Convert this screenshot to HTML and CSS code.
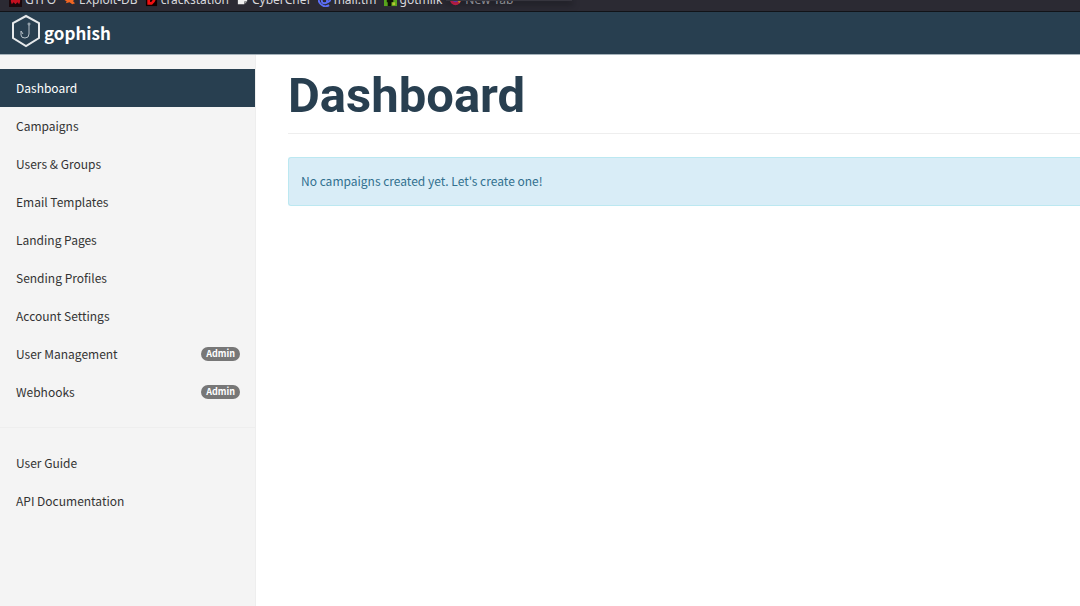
FILE: index.html
```html
<!DOCTYPE html>
<html lang="en">
<head>
<meta charset="utf-8">
<meta name="viewport" content="width=device-width, initial-scale=1">
<title>Gophish - Dashboard</title>
<link rel="stylesheet" href="styles.css">
</head>
<body>
<nav class="bookmarks" aria-label="Bookmarks">
  <a class="bookmark" href="#"><svg class="bookmark-icon" viewBox="0 0 14 14"><path fill="#1b080c" d="M0 0h14v14H0z"/><path fill="#c50f1f" d="M2 1h10v7l-1 3-2-2-2 2-2-2-2 2-1-3z"/></svg>GTFO</a>
  <a class="bookmark" href="#"><svg class="bookmark-icon" viewBox="0 0 14 14"><path fill="#f26522" d="M1 6l5-3 6 2-1 3 2 2-3 1-3-2-4 1 1-2z"/></svg>Exploit-DB</a>
  <a class="bookmark" href="#"><svg class="bookmark-icon" viewBox="0 0 14 14"><path fill="#120000" d="M1 0h12v13H1z"/><path fill="none" stroke="#f01010" stroke-width="3" d="M4 1h3q3 1 3 4t-3 5H4zM4 5h5"/></svg>crackstation</a>
  <a class="bookmark" href="#"><svg class="bookmark-icon" viewBox="0 0 14 14"><path fill="#eee" d="M2 2h10v6H9v3H2z"/><path fill="#999" d="M9 8h2v2H9z"/></svg>CyberChef</a>
  <a class="bookmark" href="#"><svg class="bookmark-icon" viewBox="0 0 14 14"><g fill="none" stroke="#5b6ef5" stroke-width="2"><path d="M12 12q-5 3-9-1t-1-8 8-1 3 5-3 2V4"/><circle cx="7" cy="7" r="3"/></g></svg>mail.tm</a>
  <a class="bookmark" href="#"><svg class="bookmark-icon" viewBox="0 0 14 14"><path fill="#58a51c" d="M0 0h14v13H0z"/><path fill="#101407" d="M3 5h7v4H3zM4 9h4v4H4z"/><path fill="#b8c832" d="M9 9h3v3H9z"/></svg>gotmilk</a>
  <a class="bookmark bookmark-dim" href="#"><svg class="bookmark-icon" viewBox="0 0 14 14"><circle cx="7" cy="6" r="6" fill="#e0224f"/><path fill="#f5a623" d="M10 2l3 5-2 3-2-3z"/><circle cx="7" cy="6" r="3" fill="#7b3fd1"/></svg>New Tab</a>
  <span class="popup-edge"></span>
</nav>
<header class="topbar">
  <a class="brand" href="#">
    <svg class="logo" viewBox="0 0 30 34"><g fill="none" stroke="#e6e9eb"><path stroke-width="2" d="M15 2l13 7v15l-13 8L2 24V9z"/><path stroke-width="1" stroke="#b9c3ca" d="M18 11v9q0 4-4 4-4 0-4-3v-4l2 3"/><circle stroke="#b9c3ca" cx="18" cy="10" r="1"/></g></svg>
    <span class="brand-name">gophish</span>
  </a>
</header>
<div class="layout">
  <aside class="sidebar">
    <ul class="menu">
      <li><a class="menu-link active" href="#" aria-current="page">Dashboard</a></li>
      <li><a class="menu-link" href="#">Campaigns</a></li>
      <li><a class="menu-link" href="#">Users &amp; Groups</a></li>
      <li><a class="menu-link" href="#">Email Templates</a></li>
      <li><a class="menu-link" href="#">Landing Pages</a></li>
      <li><a class="menu-link" href="#">Sending Profiles</a></li>
      <li><a class="menu-link" href="#">Account Settings</a></li>
      <li><a class="menu-link" href="#">User Management <span class="badge">Admin</span></a></li>
      <li><a class="menu-link" href="#">Webhooks <span class="badge">Admin</span></a></li>
    </ul>
    <ul class="menu menu-help">
      <li><a class="menu-link" href="#">User Guide</a></li>
      <li><a class="menu-link" href="#">API Documentation</a></li>
    </ul>
  </aside>
  <main class="content">
    <h1 class="title">Dashboard</h1>
    <div class="alert" role="status">No campaigns created yet. Let's create one!</div>
  </main>
</div>
</body>
</html>
```
FILE: styles.css
```css
* { box-sizing: border-box; }
body {
  margin: 0;
  min-height: 100vh;
  display: flex;
  flex-direction: column;
  background: #fff;
  color: #333;
  font: 12px/20px "Noto Sans CJK SC", "Noto Sans", sans-serif;
}
a { color: inherit; text-decoration: none; }
.bookmarks {
  position: relative;
  display: flex;
  align-items: flex-end;
  gap: 7px;
  height: 12px;
  padding: 0 9px 3px;
  overflow: hidden;
  background: #2b2a33;
  border-bottom: 1px solid #111318;
  color: #d8d8dc;
  font: 12px/16px "Noto Sans", sans-serif;
}
.bookmark { display: flex; align-items: center; gap: 3px; flex: none; }
.bookmark-icon { width: 13px; height: 13px; }
.bookmark-dim { color: #b4b4ba; }
.popup-edge {
  position: absolute;
  left: 446px;
  top: 0;
  width: 126px;
  height: 1px;
  background: #36353e;
  box-shadow: 0 2px 6px 1px rgba(16, 15, 20, 0.7);
}
.topbar { background: #283f50; border-bottom: 1px solid #a5b2ba; }
.brand {
  display: flex;
  align-items: center;
  gap: 3px;
  width: max-content;
  padding: 2px 11px 6px;
  color: #fff;
  font-size: 17px;
  font-weight: 700;
  line-height: 30px;
}
.brand-name { padding-top: 4px; }
.logo { width: 30px; height: 34px; }
.layout { flex: 1; display: grid; grid-template-columns: 256px 1fr; }
.sidebar {
  padding-top: 14px;
  background: #f4f4f4;
  border-right: 1px solid #eee;
}
.menu { margin: 0; padding: 0; list-style: none; }
.menu-help {
  margin-top: 16px;
  padding-top: 16px;
  border-top: 1px solid #eee;
}
.menu-link {
  display: flex;
  align-items: center;
  justify-content: space-between;
  padding: 9px 15px 9px 16px;
}
.menu-link.active { background: #283f50; color: #fff; }
.badge {
  padding: 0 5px;
  border-radius: 8px;
  background: #777;
  color: #fff;
  font-size: 9px;
  font-weight: 700;
  line-height: 14px;
}
.content { padding: 14px 0 0 32px; }
.title {
  margin: 0 0 23px;
  padding-bottom: 10px;
  border-bottom: 1px solid #eee;
  color: #283f50;
  font: 700 49px/54px Roboto, sans-serif;
}
.alert {
  padding: 13px 12px 14px;
  border: 1px solid #bce8f1;
  border-right: 0;
  border-radius: 3px 0 0 3px;
  background: #d9edf7;
  color: #31708f;
}
```
